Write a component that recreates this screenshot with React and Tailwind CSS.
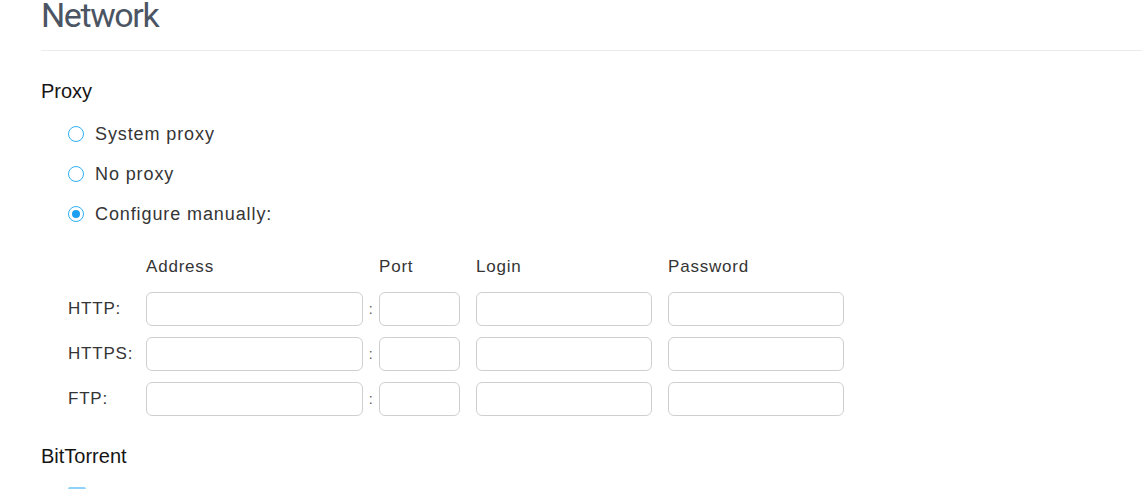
import React from "react";

const rows = ["HTTP:", "HTTPS:", "FTP:"];

function Radio({ checked, label }) {
  return (
    <label className="flex h-10 items-center cursor-pointer">
      <span className="flex h-4 w-4 items-center justify-center rounded-full border-[1.8px] border-[#2eaef5]">
        {checked && <span className="h-2 w-2 rounded-full bg-[#1f9ff0]" />}
      </span>
      <span className="ml-[11px] text-[18px] leading-6 tracking-[0.9px] text-[#353535]">{label}</span>
    </label>
  );
}

function Field({ w }) {
  return <input className={`h-[34px] ${w} rounded-[6px] border border-[#cfcfcf] bg-white px-2 outline-none`} />;
}

export default function App() {
  return (
    <div className="h-[489px] overflow-hidden bg-white pl-[41px] font-['Liberation_Sans',Arial,sans-serif]">
      {/* page title, scrolled partly out of view */}
      <div className="-mt-[5px] border-b border-[#ececec] pb-[15px]">
        <h1 className="font-['Roboto',sans-serif] text-[34px] leading-[40px] tracking-[-1.4px] text-[#4b5563]">Network</h1>
      </div>

      <h2 className="mt-[28px] text-[20px] leading-6 text-[#151515]">Proxy</h2>
      <div className="mt-[11px] pl-[27px]">
        <Radio label="System proxy" />
        <Radio label="No proxy" />
        <Radio label="Configure manually:" checked />

        {/* manual proxy table */}
        <div className="mt-[23px] text-[17px] tracking-[0.8px] text-[#353535]">
          <div className="flex h-5 items-center leading-5">
            <span className="w-[78px]" />
            <span className="w-[233px]">Address</span>
            <span className="w-[97px]">Port</span>
            <span className="w-[192px]">Login</span>
            <span>Password</span>
          </div>
          <div className="mt-[15px] flex flex-col gap-[11px]">
            {rows.map((r) => (
              <div key={r} className="flex items-center">
                <span className="w-[78px]">{r}</span>
                <Field w="w-[217px]" />
                <span className="w-[16px] text-center text-[14px] text-[#555]">:</span>
                <Field w="w-[81px]" />
                <span className="ml-4"><Field w="w-[176px]" /></span>
                <span className="ml-4"><Field w="w-[176px]" /></span>
              </div>
            ))}
          </div>
        </div>
      </div>

      <h2 className="mt-[28px] text-[20px] leading-6 text-[#151515]">BitTorrent</h2>
      <div className="mt-[8px] flex h-10 items-center pl-[27px]">
        <span className="h-[18px] w-[18px] rounded-[2px] border-2 border-[#8fd3f8]" />
      </div>
    </div>
  );
}
